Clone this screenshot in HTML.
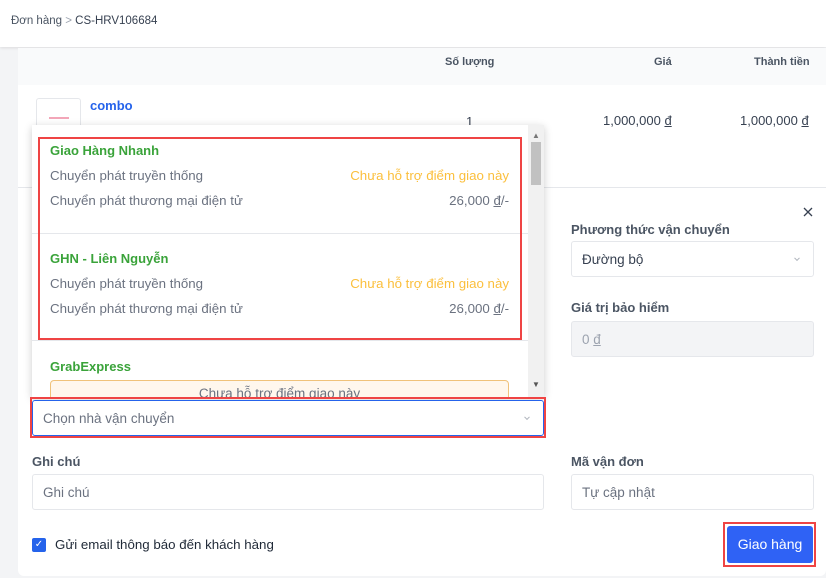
<!DOCTYPE html>
<html><head><meta charset="utf-8"><style>
*{box-sizing:border-box;margin:0;padding:0}
body{width:826px;height:578px;overflow:hidden;background:#f3f4f6;font-family:"Liberation Sans",Arial,sans-serif;position:relative;color:#374151}
.a{position:absolute}
.lbl{font-size:13px;font-weight:bold;color:#4b5563}
.inp{border:1px solid #e5e7eb;border-radius:3px;background:#fff;font-size:13.5px;color:#6b7280;padding-left:10px;display:flex;align-items:center}
.g{font-size:13px;font-weight:bold;color:#3aa33a}
.t{font-size:13.3px;color:#6b7280}
.o{font-size:13.3px;color:#fbbf3c;text-align:right}
.p{font-size:13.3px;color:#6b7280;text-align:right}
.chev{position:absolute;right:14px;top:50%;width:4px;height:4px;border-right:1px solid #b0b5bd;border-bottom:1px solid #b0b5bd;transform:translateY(-70%) rotate(45deg)}
</style></head><body>
<div class="a" style="left:0;top:0;width:826px;height:47px;background:#fff;box-shadow:0 1px 3px rgba(0,0,0,.1)"></div>
<div class="a" style="left:11px;top:15px;font-size:11.5px;color:#4b5563">Đơn hàng <span style="color:#9ca3af">&gt;</span> <span style="color:#374151">CS-HRV106684</span></div>
<div class="a" style="left:18px;top:48px;width:808px;height:528px;background:#fff;border-radius:0 0 6px 6px"></div>
<div class="a" style="left:18px;top:48px;width:808px;height:37px;background:#f9fafb"></div>
<div class="a" style="left:445px;top:56px;font-size:11px;font-weight:bold;color:#4b5563">Số lượng</div>
<div class="a" style="left:654px;top:56px;font-size:11px;font-weight:bold;color:#4b5563">Giá</div>
<div class="a" style="left:754px;top:56px;font-size:11px;font-weight:bold;color:#4b5563">Thành tiền</div>
<div class="a" style="left:36px;top:98px;width:45px;height:45px;border:1px solid #e5e7eb;border-radius:3px"><div class="a" style="left:12px;top:18px;width:20px;height:2px;background:#f3a6b8"></div></div>
<div class="a" style="left:90px;top:98px;font-size:13px;font-weight:bold;color:#2563eb">combo</div>
<div class="a" style="left:466px;top:114px;font-size:13px">1</div>
<div class="a" style="left:603px;top:113px;font-size:13px">1,000,000 <u>đ</u></div>
<div class="a" style="left:740px;top:113px;font-size:13px">1,000,000 <u>đ</u></div>
<div class="a" style="left:18px;top:187px;width:808px;height:1px;background:#e5e7eb"></div>
<svg class="a" style="left:803px;top:207px" width="10" height="10"><path d="M1 1L9 9M9 1L1 9" stroke="#374151" stroke-width="1.3"/></svg>
<div class="a lbl" style="left:571px;top:222px">Phương thức vận chuyển</div>
<div class="a inp" style="left:571px;top:241px;width:243px;height:36px;color:#374151">Đường bộ<span class="chev"></span></div>
<div class="a lbl" style="left:571px;top:300px">Giá trị bảo hiểm</div>
<div class="a inp" style="left:571px;top:321px;width:243px;height:36px;background:#f3f4f6;color:#9ca3af">0&nbsp;<u>đ</u></div>
<div class="a" style="left:32px;top:125px;width:512px;height:272px;background:#fff;box-shadow:0 2px 8px rgba(0,0,0,.2);overflow:hidden">
 <div class="a" style="left:496px;top:0;width:16px;height:272px;background:#f1f1f1"></div>
 <div class="a" style="left:499px;top:17px;width:10px;height:43px;background:#c1c1c1"></div>
 <div class="a" style="left:500px;top:6px;font-size:8px;color:#777">▲</div>
 <div class="a" style="left:500px;top:255px;font-size:8px;color:#555">▼</div>
 <div class="a" style="left:0;top:108px;width:496px;height:1px;background:#e5e7eb"></div>
 <div class="a" style="left:0;top:215px;width:496px;height:1px;background:#e5e7eb"></div>
 <div class="a g" style="left:18px;top:18px">Giao Hàng Nhanh</div>
 <div class="a t" style="left:18px;top:43px">Chuyển phát truyền thống</div>
 <div class="a o" style="right:35px;top:43px">Chưa hỗ trợ điểm giao này</div>
 <div class="a t" style="left:18px;top:68px">Chuyển phát thương mại điện tử</div>
 <div class="a p" style="right:35px;top:68px">26,000 <u>đ</u>/-</div>
 <div class="a g" style="left:18px;top:126px">GHN - Liên Nguyễn</div>
 <div class="a t" style="left:18px;top:151px">Chuyển phát truyền thống</div>
 <div class="a o" style="right:35px;top:151px">Chưa hỗ trợ điểm giao này</div>
 <div class="a t" style="left:18px;top:176px">Chuyển phát thương mại điện tử</div>
 <div class="a p" style="right:35px;top:176px">26,000 <u>đ</u>/-</div>
 <div class="a g" style="left:18px;top:234px">GrabExpress</div>
 <div class="a" style="left:18px;top:255px;width:459px;height:30px;border:1px solid #f0c27a;border-radius:4px;background:#fff7ed;text-align:center;font-size:13.5px;color:#6b7280;padding-top:5px">Chưa hỗ trợ điểm giao này</div>
</div>
<div class="a" style="left:38px;top:137px;width:484px;height:203px;border:2px solid #ef4444"></div>
<div class="a inp" style="left:32px;top:400px;width:512px;height:36px;border:1px solid #2563eb;color:#6b7280">Chọn nhà vận chuyển<span class="chev"></span></div>
<div class="a" style="left:30px;top:397px;width:516px;height:41px;border:2px solid #ef4444"></div>
<div class="a lbl" style="left:32px;top:454px">Ghi chú</div>
<div class="a inp" style="left:32px;top:474px;width:512px;height:36px">Ghi chú</div>
<div class="a lbl" style="left:571px;top:454px">Mã vận đơn</div>
<div class="a inp" style="left:571px;top:474px;width:243px;height:36px">Tự cập nhật</div>
<div class="a" style="left:32px;top:538px;width:14px;height:14px;background:#2563eb;border-radius:2px;color:#fff;font-size:10px;text-align:center;line-height:14px">✓</div>
<div class="a" style="left:55px;top:537px;font-size:13.3px;color:#1f2937">Gửi email thông báo đến khách hàng</div>
<div class="a" style="left:723px;top:522px;width:93px;height:45px;border:2px solid #ef4444"></div>
<div class="a" style="left:727px;top:526px;width:86px;height:37px;background:#2f62f5;border-radius:3px;color:#fff;font-size:14px;text-align:center;line-height:37px">Giao hàng</div>
</body></html>
